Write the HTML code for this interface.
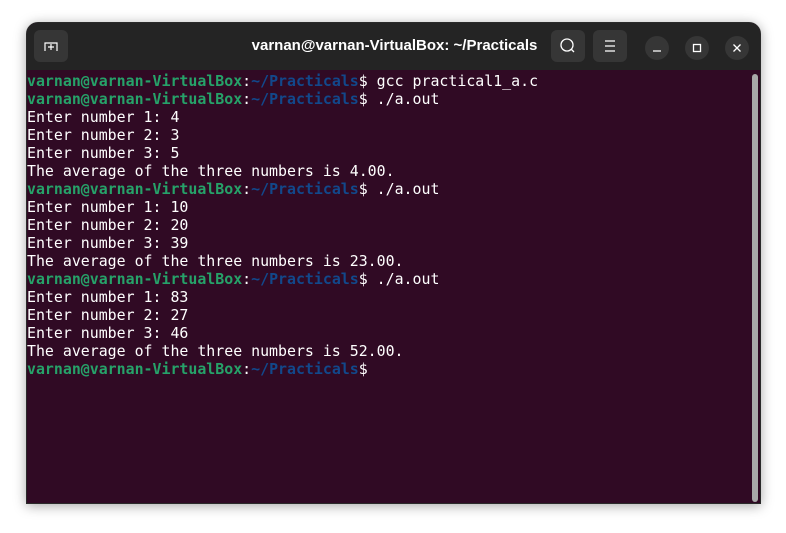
<!DOCTYPE html>
<html><head><style>
body{margin:0;width:786px;height:533px;background:#fff;overflow:hidden;position:relative;font-family:"Liberation Sans",sans-serif}
.win{position:absolute;left:26px;top:22px;width:735px;height:482px;background:#300a24;border-radius:12px 12px 0 0;box-shadow:0 2px 12px rgba(0,0,0,.35);overflow:hidden;border:1px solid #2a2a2a;box-sizing:border-box}
.tb{position:absolute;left:0;top:0;width:100%;height:47px;background:#242424}
.btn{position:absolute;top:7px;width:34px;height:32px;background:#363636;border-radius:6px}
.cb{position:absolute;top:13px;width:24px;height:24px;background:#363636;border-radius:50%}
.title{position:absolute;left:0;width:735px;top:14px;text-align:center;color:#fff;font-weight:bold;font-size:15px}
pre{position:absolute;left:0;top:49px;margin:0;font-family:"DejaVu Sans Mono","Liberation Mono",monospace;font-size:14.9px;line-height:18px;color:#fff}
.g{color:#26a269;font-weight:bold}.b{color:#12488b;font-weight:bold}
.sb{position:absolute;left:725px;top:51px;width:6px;height:428px;background:#a8a8a8;border-radius:3px}
</style></head><body>
<div class="win">
<div class="tb">
<div class="btn" style="left:7px"><svg width="34" height="32"><path d="M11 21v-8h12v8M17 14v6M14 17h6" stroke="#fff" stroke-width="1.2" fill="none"/></svg></div>
<div class="title" style="left:0">varnan@varnan-VirtualBox: ~/Practicals</div>
<div class="btn" style="left:524px"><svg width="34" height="32"><circle cx="16" cy="15" r="6" stroke="#fff" stroke-width="1.3" fill="none"/><path d="M20 19l3 3" stroke="#fff" stroke-width="1.3"/></svg></div>
<div class="btn" style="left:566px"><svg width="34" height="32"><path d="M12 11h10M12 16h10M12 21h10" stroke="#fff" stroke-width="1.2"/></svg></div>
<div class="cb" style="left:618px"><svg width="24" height="24"><path d="M8 15h8" stroke="#fff" stroke-width="1.3"/></svg></div>
<div class="cb" style="left:658px"><svg width="24" height="24"><rect x="8.5" y="8.5" width="7" height="7" stroke="#fff" stroke-width="1.3" fill="none"/></svg></div>
<div class="cb" style="left:698px"><svg width="24" height="24"><path d="M8.5 8.5l7 7M15.5 8.5l-7 7" stroke="#fff" stroke-width="1.3"/></svg></div>
</div>
<pre><span class="g">varnan@varnan-VirtualBox</span>:<span class="b">~/Practicals</span>$ gcc practical1_a.c
<span class="g">varnan@varnan-VirtualBox</span>:<span class="b">~/Practicals</span>$ ./a.out
Enter number 1: 4
Enter number 2: 3
Enter number 3: 5
The average of the three numbers is 4.00.
<span class="g">varnan@varnan-VirtualBox</span>:<span class="b">~/Practicals</span>$ ./a.out
Enter number 1: 10
Enter number 2: 20
Enter number 3: 39
The average of the three numbers is 23.00.
<span class="g">varnan@varnan-VirtualBox</span>:<span class="b">~/Practicals</span>$ ./a.out
Enter number 1: 83
Enter number 2: 27
Enter number 3: 46
The average of the three numbers is 52.00.
<span class="g">varnan@varnan-VirtualBox</span>:<span class="b">~/Practicals</span>$</pre>
<div class="sb"></div>
</div>
</body></html>
